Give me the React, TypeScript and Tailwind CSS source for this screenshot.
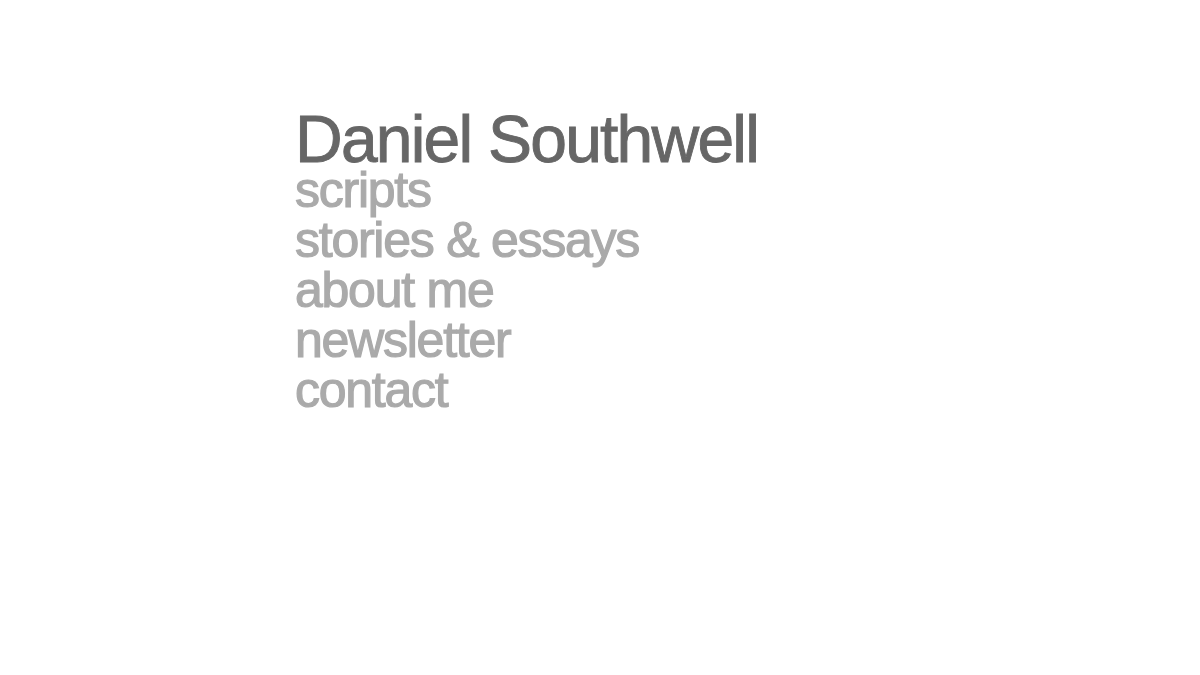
export default function App() {
  const links = ['scripts', 'stories & essays', 'about me', 'newsletter', 'contact'];
  return (
    <div className="min-h-screen bg-white pl-[295px] pt-[113px]" style={{ fontFamily: '"Liberation Sans", Arial, sans-serif' }}>
      <h1 className="text-[66px] leading-[52px] tracking-[-0.027em] text-[#666666] [-webkit-text-stroke:0.9px_#666666]">
        Daniel Southwell
      </h1>
      <nav className="flex flex-col">
        {links.map(l => (
          <a
            key={l}
            href="#"
            className="text-[50px] leading-[50px] tracking-[-0.025em] text-[#aaaaaa] [-webkit-text-stroke:1.2px_#aaaaaa]"
          >
            {l}
          </a>
        ))}
      </nav>
    </div>
  );
}
